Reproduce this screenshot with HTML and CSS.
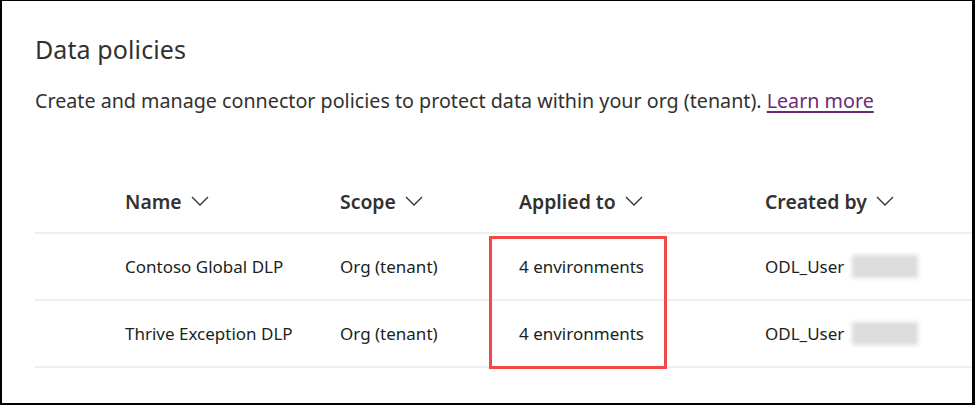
FILE: index.html
```html
<!DOCTYPE html>
<html>
<head>
<meta charset="utf-8">
<link rel="stylesheet" href="styles.css">
</head>
<body>
<div class="frame">
  <h1 class="title">Data policies</h1>
  <p class="desc">Create and manage connector policies to protect data within your org (tenant). <a class="link" href="#">Learn more</a></p>
  <div class="table">
    <div class="row head">
      <div class="cell"></div>
      <div class="cell">Name <svg class="chev" viewBox="0 0 18 10"><polyline points="1,1 9,9 17,1"/></svg></div>
      <div class="cell">Scope <svg class="chev" viewBox="0 0 18 10"><polyline points="1,1 9,9 17,1"/></svg></div>
      <div class="cell">Applied to <svg class="chev" viewBox="0 0 18 10"><polyline points="1,1 9,9 17,1"/></svg></div>
      <div class="cell">Created by <svg class="chev" viewBox="0 0 18 10"><polyline points="1,1 9,9 17,1"/></svg></div>
    </div>
    <div class="row">
      <div class="cell"></div>
      <div class="cell">Contoso Global DLP</div>
      <div class="cell">Org (tenant)</div>
      <div class="cell">4 environments</div>
      <div class="cell">ODL_User <span class="blur"></span></div>
    </div>
    <div class="row">
      <div class="cell"></div>
      <div class="cell">Thrive Exception DLP</div>
      <div class="cell">Org (tenant)</div>
      <div class="cell">4 environments</div>
      <div class="cell">ODL_User <span class="blur"></span></div>
    </div>
    <div class="highlight"></div>
  </div>
</div>
</body>
</html>
```
FILE: styles.css
```css
html, body {
  margin: 0;
  padding: 0;
  background: #fff;
}
.frame {
  width: 975px;
  height: 405px;
  box-sizing: border-box;
  border: 2px solid #000;
  border-top-width: 1px;
  border-right-width: 3px;
  padding: 0 0 0 33px;
  font-family: "Segoe UI", "Noto Sans", sans-serif;
  color: #323130;
  overflow: hidden;
}
.title {
  margin: 0;
  padding-top: 31px;
  font-size: 25px;
  font-weight: 400;
  line-height: 34px;
  color: #323130;
  letter-spacing: 0.1px;
}
.desc {
  margin: 0;
  padding-top: 22px;
  font-size: 19.7px;
  line-height: 26px;
  color: #323130;
}
.link {
  color: #6b2a76;
  text-decoration: underline;
  text-decoration-thickness: 2px;
  text-underline-offset: 3px;
}
.table {
  position: relative;
  margin-top: 56px;
}
.row {
  display: grid;
  grid-template-columns: 90px 215px 179px 246px 1fr;
  height: 67px;
  border-bottom: 2px solid #efeeed;
  box-sizing: border-box;
  align-items: center;
  font-size: 17px;
  color: #201f1e;
}
.row.head {
  height: 64px;
  font-size: 19.4px;
  font-weight: 600;
  color: #323130;
}
.cell {
  display: flex;
  align-items: center;
  white-space: nowrap;
}
.chev {
  width: 18px;
  height: 10px;
  margin-left: 9px;
  fill: none;
  stroke: #323130;
  stroke-width: 1.3;
}
.blur {
  display: inline-block;
  width: 66px;
  height: 23px;
  margin-left: 8px;
  background: #dcdcdc;
  filter: blur(2px);
}
.highlight {
  position: absolute;
  left: 454px;
  top: 66px;
  width: 178px;
  height: 133px;
  box-sizing: border-box;
  border: 3px solid #f24848;
}
```
